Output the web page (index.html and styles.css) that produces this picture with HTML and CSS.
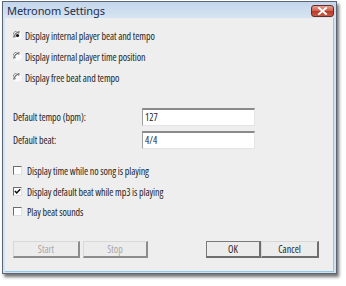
FILE: index.html
```html
<!DOCTYPE html>
<html>
<head>
<meta charset="utf-8">
<link rel="stylesheet" href="styles.css">
</head>
<body>
<div class="window">
  <div class="titlebar">
    <span class="title">Metronom Settings</span>
    <span class="close">
      <svg width="11" height="8" viewBox="0 0 11 8"><path d="M2 1 L9 7 M9 1 L2 7" stroke="#fff" stroke-width="2" stroke-linecap="square"/></svg>
    </span>
  </div>
  <div class="client">
    <div class="radios">
      <div class="row">
        <svg class="radio" width="9" height="9" viewBox="0 0 9 9"><circle cx="4.5" cy="4.5" r="4.2" fill="#fbfbfb"/><path d="M1.2 7 A4 4 0 0 1 7 1.2" fill="none" stroke="#8a8a8a" stroke-width="1"/><path d="M2.1 6.2 A3 3 0 0 1 6.2 2.1" fill="none" stroke="#333" stroke-width="1"/><circle cx="4.5" cy="4.5" r="1.6" fill="#111"/></svg>
        <span>Display internal player beat and tempo</span>
      </div>
      <div class="row">
        <svg class="radio" width="9" height="9" viewBox="0 0 9 9"><circle cx="4.5" cy="4.5" r="4.2" fill="#fbfbfb"/><path d="M1.2 7 A4 4 0 0 1 7 1.2" fill="none" stroke="#8a8a8a" stroke-width="1"/><path d="M2.1 6.2 A3 3 0 0 1 6.2 2.1" fill="none" stroke="#333" stroke-width="1"/></svg>
        <span>Display internal player time position</span>
      </div>
      <div class="row">
        <svg class="radio" width="9" height="9" viewBox="0 0 9 9"><circle cx="4.5" cy="4.5" r="4.2" fill="#fbfbfb"/><path d="M1.2 7 A4 4 0 0 1 7 1.2" fill="none" stroke="#8a8a8a" stroke-width="1"/><path d="M2.1 6.2 A3 3 0 0 1 6.2 2.1" fill="none" stroke="#333" stroke-width="1"/></svg>
        <span>Display free beat and tempo</span>
      </div>
    </div>

    <div class="fields">
      <div class="field">
        <span class="label">Default tempo (bpm):</span>
        <span class="input">127</span>
      </div>
      <div class="field">
        <span class="label">Default beat:</span>
        <span class="input">4/4</span>
      </div>
    </div>

    <div class="checks">
      <div class="row">
        <span class="check"></span>
        <span>Display time while no song is playing</span>
      </div>
      <div class="row">
        <span class="check"><svg width="7" height="7" viewBox="0 0 7 7"><path d="M0.8 3 L2.7 4.9 L6.2 1.2" fill="none" stroke="#111" stroke-width="1.5"/></svg></span>
        <span>Display default beat while mp3 is playing</span>
      </div>
      <div class="row">
        <span class="check"></span>
        <span>Play beat sounds</span>
      </div>
    </div>

    <div class="buttons">
      <div class="group">
        <span class="btn disabled start">Start</span>
        <span class="btn disabled stop">Stop</span>
      </div>
      <div class="group">
        <span class="btn default ok">OK</span>
        <span class="btn cancel">Cancel</span>
      </div>
    </div>
  </div>
</div>
</body>
</html>
```

FILE: styles.css
```css
html, body {
  margin: 0;
  padding: 0;
  background: #ffffff;
}
body {
  width: 346px;
  height: 286px;
  overflow: hidden;
  font-family: "Open Sans", "Liberation Sans", Arial, sans-serif;
  font-stretch: 85%;
  font-size: 10px;
  color: #262626;
}
.window {
  margin: 1px 0 0 2px;
  width: 333px;
  height: 271px;
  border: 1px solid #5b6675;
  background: #d4e2f0;
  box-shadow: 2px 3px 3px rgba(0,0,0,0.55);
  display: flex;
  flex-direction: column;
}
.titlebar {
  height: 16px;
  background: linear-gradient(#c3d6eb, #d7e4f2);
  display: flex;
  align-items: center;
  justify-content: space-between;
  padding: 0 2px 0 4px;
}
.title {
  font-family: "Noto Sans", "Liberation Sans", sans-serif;
  font-stretch: 100%;
  font-size: 11px;
  color: #1e2f4a;
  letter-spacing: -0.1px;
  padding-top: 1px;
}
.close {
  width: 23px;
  height: 12px;
  box-sizing: border-box;
  border: 1px solid #6e2a22;
  border-radius: 3px;
  background: linear-gradient(#e3a196, #cf5c47 50%, #b8382a 51%, #c75a44);
  display: flex;
  align-items: center;
  justify-content: center;
  margin-top: 1px;
}
.client {
  flex: 1;
  margin: 0 2px 1px 2px;
  background: #eeeeee;
  border-right: 1px solid #8fc9e6;
  border-bottom: 1px solid #8fc9e6;
  display: flex;
  flex-direction: column;
  padding: 0 0 0 8px;
  letter-spacing: -0.1px;
}
.row {
  display: flex;
  align-items: center;
  height: 21px;
}
.radios {
  padding-top: 7px;
}
.radio {
  margin-right: 3px;
  flex: none;
}
.fields {
  margin-top: 20px;
  display: flex;
  flex-direction: column;
  gap: 5px;
}
.field {
  display: flex;
  align-items: center;
  height: 18px;
}
.label {
  width: 129px;
}
.input {
  width: 113px;
  height: 18px;
  box-sizing: border-box;
  background: #ffffff;
  border-top: 2px solid #8a8a8a;
  border-left: 1px solid #a0a0a0;
  border-right: 1px solid #e4e4e4;
  border-bottom: 1px solid #e4e4e4;
  padding-left: 2px;
  line-height: 15px;
  letter-spacing: 0;
}
.checks {
  margin-top: 11px;
}
.checks .row { height: 21px; }
.checks .row:last-child { height: 19px; }
.check {
  width: 9px;
  height: 9px;
  box-sizing: border-box;
  background: #fff;
  border-top: 1px solid #6c6c6c;
  border-left: 1px solid #6c6c6c;
  border-right: 1px solid #e0e0e0;
  border-bottom: 1px solid #e0e0e0;
  margin-right: 5px;
  display: flex;
  align-items: center;
  justify-content: center;
  flex: none;
}
.buttons {
  margin-top: 20px;
  display: flex;
  justify-content: space-between;
  padding-right: 14px;
}
.group {
  display: flex;
}
.btn {
  height: 17px;
  box-sizing: border-box;
  background: #ececec;
  border-top: 1px solid #d8d8d8;
  border-left: 1px solid #d8d8d8;
  border-right: 2px solid #6e6e6e;
  border-bottom: 2px solid #6e6e6e;
  display: flex;
  align-items: center;
  justify-content: center;
  letter-spacing: 0;
}
.disabled {
  color: #a8a8a8;
  border-right-color: #8c8c8c;
  border-bottom-color: #8c8c8c;
}
.start { width: 67px; margin-right: 3px; }
.stop { width: 65px; }
.ok {
  width: 55px;
  border: 1px solid #7a7a7a;
  border-right: 2px solid #6e6e6e;
  border-bottom: 2px solid #6e6e6e;
}
.cancel { width: 58px; }
```
